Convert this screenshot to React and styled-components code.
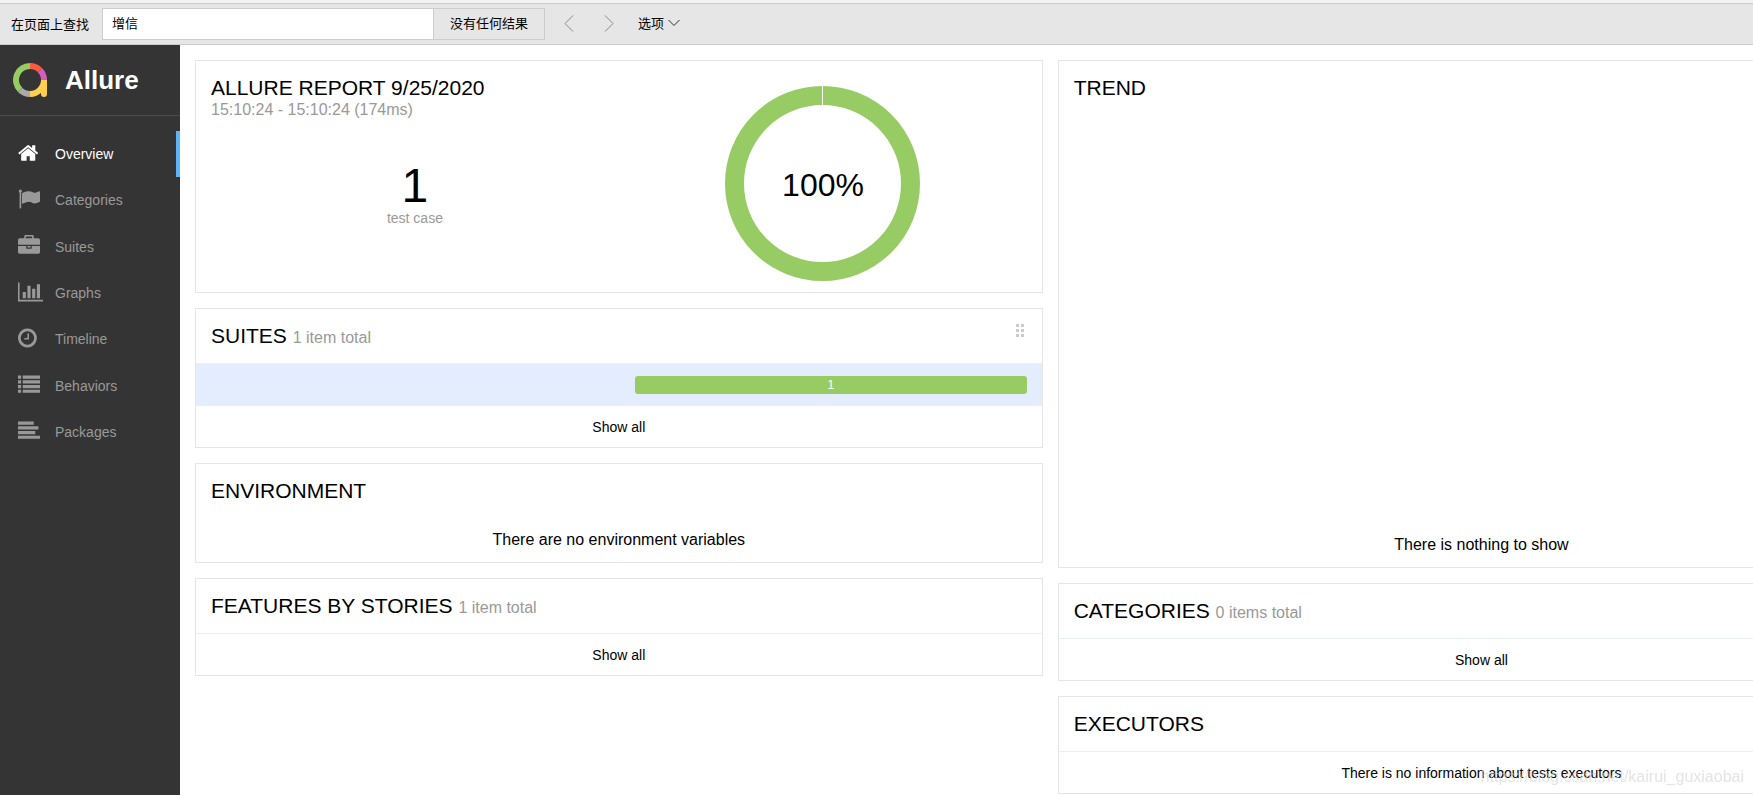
import styled, { createGlobalStyle } from "styled-components"

const NAV = [
  { name: "Overview", icon: "home", active: true },
  { name: "Categories", icon: "flag" },
  { name: "Suites", icon: "briefcase" },
  { name: "Graphs", icon: "chart" },
  { name: "Timeline", icon: "clock" },
  { name: "Behaviors", icon: "list" },
  { name: "Packages", icon: "align" },
]

const ICONS = {
  home: {
    x: 64,
    w: 1664,
    d: "M1472 992v480q0 26-19 45t-45 19h-384v-384h-256v384h-384q-26 0-45-19t-19-45v-480q0-1 .5-3t.5-3l575-474 575 474q1 2 1 6zm223-69l-62 74q-8 9-21 11h-3q-13 0-21-7l-692-577-692 577q-12 8-24 7-13-2-21-11l-62-74q-8-10-7-23.5t11-21.5l719-599q32-26 76-26t76 26l244 204v-195q0-14 9-23t23-9h192q14 0 23 9t9 23v408l219 182q10 8 11 21.5t-7 23.5z",
  },
  flag: {
    x: 0,
    w: 1792,
    d: "M320 256q0 72-64 110v1266q0 13-9.5 22.5t-22.5 9.5h-64q-13 0-22.5-9.5t-9.5-22.5v-1266q-64-38-64-110 0-53 37.5-90.5t90.5-37.5 90.5 37.5 37.5 90.5zm1472 64v763q0 25-12.5 38.5t-39.5 27.5q-215 116-369 116-61 0-123.5-22t-108.5-48-115.5-48-142.5-22q-192 0-464 146-17 9-33 9-26 0-45-19t-19-45v-742q0-32 31-55 21-14 79-43 236-120 421-120 107 0 200 29t219 88q38 19 88 19 54 0 117.5-21t110-47 88-47 54.5-21q26 0 45 19t19 45z",
  },
  briefcase: {
    x: 0,
    w: 1792,
    d: "M640 256h512v-128h-512v128zm1152 640v480q0 66-47 113t-113 47h-1472q-66 0-113-47t-47-113v-480h672v160q0 26 19 45t45 19h320q26 0 45-19t19-45v-160h672zm-768 0v128h-256v-128h256zm768-480v384h-1792v-384q0-66 47-113t113-47h352v-160q0-40 28-68t68-28h576q40 0 68 28t28 68v160h352q66 0 113 47t47 113z",
  },
  chart: {
    x: 0,
    w: 2048,
    d: "M640 896v512h-256v-512h256zm384-512v1024h-256v-1024h256zm1024 1152v128h-2048v-1536h128v1408h1920zm-640-896v768h-256v-768h256zm384-384v1152h-256v-1152h256z",
  },
  clock: {
    x: 128,
    w: 1536,
    d: "M1024 544v448q0 14-9 23t-23 9h-320q-14 0-23-9t-9-23v-64q0-14 9-23t23-9h224v-352q0-14 9-23t23-9h64q14 0 23 9t9 23zm416 352q0-148-73-273t-198-198-273-73-273 73-198 198-73 273 73 273 198 198 273 73 273-73 198-198 73-273zm224 0q0 209-103 385.5t-279.5 279.5-385.5 103-385.5-103-279.5-279.5-103-385.5 103-385.5 279.5-279.5 385.5-103 385.5 103 279.5 279.5 103 385.5z",
  },
  list: {
    x: 0,
    w: 1792,
    d: "M0 128h256v256h-256zM384 128h1408v256h-1408zM0 512h256v256h-256zM384 512h1408v256h-1408zM0 896h256v256h-256zM384 896h1408v256h-1408zM0 1280h256v256h-256zM384 1280h1408v256h-1408z",
  },
  align: {
    x: 0,
    w: 1792,
    d: "M0 128h1280v256h-1280zM0 512h1664v256h-1664zM0 896h1408v256h-1408zM0 1280h1792v256h-1792z",
  },
}

const NavIcon = ({ name }) => {
  const { x, w, d } = ICONS[name]
  return (
    <svg viewBox={`${x} 0 ${w} 1792`} aria-hidden="true">
      <path d={d} />
    </svg>
  )
}

const Logo = () => (
  <svg width="34" height="34" viewBox="0 0 34 34" fill="none" strokeWidth="6" aria-hidden="true">
    <path d="M7.1 26.9A14 14 0 0 1 17 3" stroke="#97cc64" />
    <path d="M17 3A14 14 0 0 1 26.9 7.1" stroke="#fd5a3e" />
    <path d="M26.9 7.1A14 14 0 0 1 31 17" stroke="#d35ebe" />
    <path d="M17 31A14 14 0 0 1 7.1 26.9" stroke="#aaa" />
    <path d="M31 17A14 14 0 0 1 17 31" stroke="#ffd050" />
    <path d="M28 17h6v14a3 3 0 0 1-6 0z" fill="#ffd050" stroke="none" />
  </svg>
)

const Donut = () => (
  <svg width="195" height="195" viewBox="0 0 195 195" role="img" aria-label="100% passed">
    <circle cx="97.5" cy="97.5" r="88" fill="none" stroke="#97cc64" strokeWidth="19" />
    <path d="M97.5 0v20" stroke="#fff" />
    <DonutText x="98" y="110">100%</DonutText>
  </svg>
)

export default () => {
  return (
    <Page>
      <GlobalStyle />
      <FindBar>
        <FindLabel htmlFor="find">在页面上查找</FindLabel>
        <FindInput id="find" type="text" defaultValue="增信" />
        <FindResult>没有任何结果</FindResult>
        <FindButton aria-label="Previous">
          <svg width="10" height="17" viewBox="0 0 10 17"><path d="M9 .5l-8 8 8 8" /></svg>
        </FindButton>
        <FindButton aria-label="Next">
          <svg width="10" height="17" viewBox="0 0 10 17"><path d="M1 .5l8 8-8 8" /></svg>
        </FindButton>
        <OptionsButton>
          选项
          <svg width="12" height="8" viewBox="0 0 12 8"><path d="M.5 1l5.5 5.500 5.500-5.500" /></svg>
        </OptionsButton>
      </FindBar>
      <Main>
        <Sidebar>
          <Brand href="#">
            <Logo />
            Allure
          </Brand>
          <Nav>
            {NAV.map((item) => (
              <NavLink key={item.name} href="#" $active={item.active}>
                <IconSlot><NavIcon name={item.icon} /></IconSlot>
                {item.name}
              </NavLink>
            ))}
          </Nav>
        </Sidebar>
        <Content>
          <Column>
            <Widget>
              <Summary>
                <SummaryInfo>
                  <Title>ALLURE REPORT 9/25/2020</Title>
                  <Period>15:10:24 - 15:10:24 (174ms)</Period>
                  <Count>1</Count>
                  <CountLabel>test case</CountLabel>
                </SummaryInfo>
                <SummaryChart><Donut /></SummaryChart>
              </Summary>
            </Widget>
            <Widget>
              <Header>
                <Title>SUITES <Small>1 item total</Small></Title>
                <svg width="11" height="13" fill="#ccc" aria-hidden="true">
                  <path d="M0 0h3v3H0zM5 0h3v3H5zM0 5h3v3H0zM5 5h3v3H5zM0 10h3v3H0zM5 10h3v3H5z" />
                </svg>
              </Header>
              <SuiteRow href="#" aria-label="1 passed">
                <Bar>1</Bar>
              </SuiteRow>
              <Footer as="a" href="#">Show all</Footer>
            </Widget>
            <Widget>
              <Header><Title>ENVIRONMENT</Title></Header>
              <Empty>There are no environment variables</Empty>
            </Widget>
            <Widget>
              <Header><Title>FEATURES BY STORIES <Small>1 item total</Small></Title></Header>
              <Footer as="a" href="#">Show all</Footer>
            </Widget>
          </Column>
          <Column>
            <Widget>
              <Header><Title>TREND</Title></Header>
              <Empty $tall>There is nothing to show</Empty>
            </Widget>
            <Widget>
              <Header><Title>CATEGORIES <Small>0 items total</Small></Title></Header>
              <Footer as="a" href="#">Show all</Footer>
            </Widget>
            <Widget>
              <Header><Title>EXECUTORS</Title></Header>
              <Footer>There is no information about tests executors</Footer>
            </Widget>
          </Column>
        </Content>
      </Main>
      <Watermark>https://blog.csdn.net/kairui_guxiaobai</Watermark>
    </Page>
  )
}

const GlobalStyle = createGlobalStyle`
  * {
    box-sizing: border-box;
  }
  body {
    margin: 0;
    background: #fff;
    color: #000;
    font-family: "Liberation Sans", Arial, "Noto Sans CJK SC", sans-serif;
  }
  a {
    color: inherit;
    text-decoration: none;
  }
`

const Page = styled.div`
  min-height: 100vh;
  display: flex;
  flex-direction: column;
  overflow: hidden;
`

const FindBar = styled.div`
  display: flex;
  align-items: center;
  height: 45px;
  padding-left: 11px;
  background: #e6e6e6;
  border-top: 3px solid #f2f2f2;
  border-bottom: 1px solid #ccc;
  box-shadow: inset 0 1px #ccc;
  font-size: 13px;
`

const FindLabel = styled.label`
  margin-right: 13px;
`

const FindInput = styled.input`
  width: 332px;
  height: 32px;
  padding: 0 9px 2px;
  border: 1px solid #ccc;
  background: #fff;
  font: inherit;
`

const FindResult = styled.output`
  display: flex;
  align-items: center;
  height: 32px;
  padding: 0 16px 2px;
  margin-right: 10px;
  border: 1px solid #ccc;
  border-left: 0;
`

const FindButton = styled.button`
  display: flex;
  align-items: center;
  justify-content: center;
  width: 28px;
  height: 32px;
  margin-right: 12px;
  padding: 0;
  border: 0;
  background: none;

  svg {
    fill: none;
    stroke: #888;
  }
`

const OptionsButton = styled.button`
  display: flex;
  align-items: center;
  gap: 4px;
  height: 32px;
  padding: 0 3px 2px;
  border: 0;
  background: none;
  color: #000;
  font: inherit;

  svg {
    fill: none;
    stroke: #333;
  }
`

const Main = styled.div`
  flex: 1;
  display: flex;
`

const Sidebar = styled.aside`
  flex: 0 0 180px;
  background: #343434;
  color: #999;
`

const Brand = styled.a`
  display: flex;
  align-items: center;
  gap: 18px;
  height: 71px;
  padding: 0 13px;
  border-bottom: 1px solid #4d4d4d;
  color: #fff;
  font-size: 26px;
  font-weight: bold;
`

const Nav = styled.nav`
  display: grid;
  grid-auto-rows: 1fr;
  height: 324px;
  margin-top: 15px;
`

const NavLink = styled.a`
  display: flex;
  align-items: center;
  padding-left: 18px;
  border-right: 4px solid ${(p) => (p.$active ? "#5fb3f9" : "transparent")};
  color: ${(p) => (p.$active ? "#fff" : "#999")};
  font-size: 14px;
`

const IconSlot = styled.span`
  display: flex;
  width: 37px;
  padding-bottom: 2px;

  svg {
    height: 22px;
    fill: currentColor;
  }
`

const Content = styled.main`
  flex: 1;
  min-width: 0;
  display: grid;
  grid-template-columns: repeat(2, calc(55% - 1px));
  gap: 15px;
  align-items: start;
  padding: 15px 15px 0;
`

const Column = styled.div`
  display: grid;
  gap: 15px;
`

const Widget = styled.section`
  border: 1px solid #e5e5e5;
`

const Header = styled.div`
  display: flex;
  justify-content: space-between;
  align-items: flex-start;
  padding: 15px;
`

const Title = styled.h2`
  margin: 0;
  font-size: 21px;
  line-height: 24px;
  font-weight: normal;
`

const Small = styled.small`
  color: #999;
  font-size: 16px;
  line-height: 16px;
`

const Summary = styled.div`
  display: grid;
  grid-template-columns: 1fr 1fr;
  padding: 0 15px;
`

const SummaryInfo = styled.div`
  padding-top: 15px;
`

const Period = styled.div`
  margin-bottom: 42px;
  color: #999;
  font-size: 16px;
  line-height: 20px;
`

const Count = styled.div`
  font-size: 48px;
  line-height: 48px;
  text-align: center;
`

const CountLabel = styled.div`
  color: #999;
  font-size: 14px;
  line-height: 16px;
  text-align: center;
`

const SummaryChart = styled.div`
  display: flex;
  justify-content: center;
  padding: 25px 0 11px;
`

const DonutText = styled.text`
  font-size: 32px;
  text-anchor: middle;
`

const SuiteRow = styled.a`
  display: flex;
  justify-content: flex-end;
  align-items: center;
  height: 42px;
  padding: 0 15px;
  border-top: 1px solid #eceff1;
  background: #e4edfe;
`

const Bar = styled.span`
  width: 48%;
  border-radius: 3px;
  background: #97cc64;
  color: #fff;
  font-size: 12px;
  line-height: 18px;
  text-align: center;
`

const Footer = styled.div`
  display: flex;
  align-items: center;
  justify-content: center;
  height: 42px;
  border-top: 1px solid #eceff1;
  font-size: 14px;
`

const Empty = styled.div`
  display: flex;
  align-items: flex-end;
  justify-content: center;
  height: ${(p) => (p.$tall ? "452px" : "44px")};
  padding-bottom: 13px;
  font-size: 16px;
  line-height: 18px;
`

const Watermark = styled.div`
  position: fixed;
  right: 9px;
  bottom: 9px;
  color: rgba(210, 210, 210, 0.6);
  font-size: 16px;
  line-height: 18px;
  pointer-events: none;
`
